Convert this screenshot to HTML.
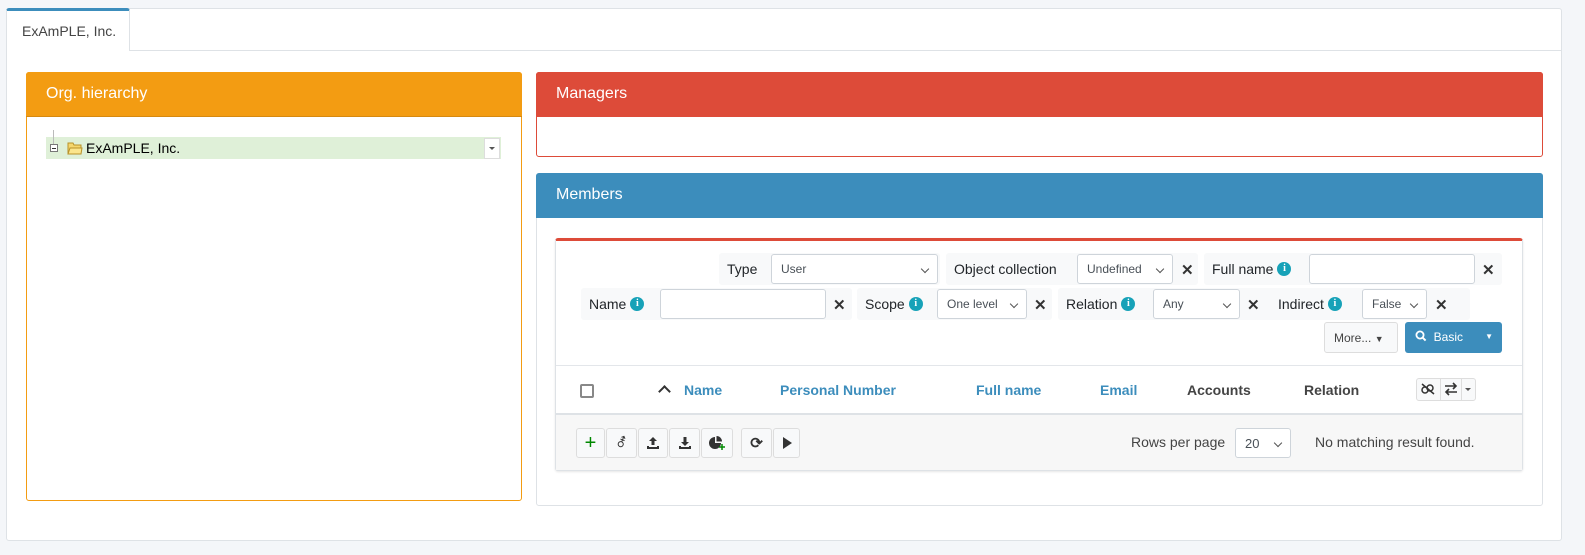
<!DOCTYPE html>
<html><head><meta charset="utf-8"><style>
*{box-sizing:border-box;margin:0;padding:0}
body{width:1585px;height:555px;background:#f4f6f9;font-family:"Liberation Sans",sans-serif;position:relative;overflow:hidden;color:#212529}
.a{position:absolute}
.lbl{position:absolute;background:#f8f9fa;border-radius:3px;font-size:14px;color:#212529;display:flex;align-items:center}
.sel{position:absolute;background:#fff;border:1px solid #ced4da;border-radius:3px;font-size:12px;color:#495057;padding-left:9px;display:flex;align-items:center}
.sel:after{content:"";position:absolute;right:9px;top:11px;width:5px;height:5px;border-right:1.3px solid #555;border-bottom:1.3px solid #555;transform:rotate(45deg)}
.inp{position:absolute;background:#fff;border:1px solid #ced4da;border-radius:3px}
.x{position:absolute;font-size:15px;font-weight:bold;color:#333}
.i{display:inline-block;width:14px;height:14px;border-radius:50%;background:#17a2b8;color:#fff;font-size:10px;font-weight:bold;text-align:center;line-height:14px;margin-left:4px;font-family:"Liberation Serif",serif}
.th{position:absolute;top:382px;font-size:14px;font-weight:bold;color:#3c8dbc}
.btn{position:absolute;top:428px;height:30px;background:#f8f9fa;border:1px solid #ddd;border-radius:3px;display:flex;align-items:center;justify-content:center;font-size:13px;color:#333}
</style></head><body>
<div class="a" style="left:6px;top:8px;width:1556px;height:533px;background:#fff;border:1px solid #dee2e6;border-radius:3px"></div>
<div class="a" style="left:6px;top:50px;width:1556px;height:1px;background:#dee2e6"></div>
<div class="a" style="left:6px;top:8px;width:124px;height:43px;background:#fff;border:1px solid #dee2e6;border-bottom:none;border-top:3px solid #3c8dbc;border-radius:3px 3px 0 0;font-size:14px;color:#444;padding:12px 0 0 15px">ExAmPLE, Inc.</div>

<div class="a" style="left:26px;top:72px;width:496px;height:429px;border:1px solid #f39c12;border-radius:3px;background:#fff"></div>
<div class="a" style="left:26px;top:72px;width:496px;height:45px;background:#f39c12;border-radius:3px 3px 0 0;color:#fff;font-size:16px;padding:13px 0 0 20px;border-bottom:1px solid #d68910">Org. hierarchy</div>
<div class="a" style="left:46px;top:137px;width:455px;height:22px;background:#dff0d8"></div>
<div class="a" style="left:53px;top:130px;width:1px;height:14px;background:#bbb"></div>
<div class="a" style="left:50px;top:144px;width:8px;height:8px;border:1px solid #777;background:#fff"></div>
<div class="a" style="left:52px;top:147.5px;width:4px;height:1px;background:#333"></div>
<svg class="a" style="left:67px;top:141px" width="16" height="14" viewBox="0 0 16 14"><path d="M1 2h5l1 2h7v9H1z" fill="#f5d76e" stroke="#b8922a"/><path d="M1 13l2-6h12l-1 6z" fill="#fbe58c" stroke="#b8922a"/></svg>
<div class="a" style="left:86px;top:140px;font-size:14px;color:#000">ExAmPLE, Inc.</div>
<div class="a" style="left:484px;top:138px;width:16px;height:21px;background:#fff;border:1px solid #ddd"></div>
<div class="a" style="left:489px;top:147px;border:3px solid transparent;border-top:3px solid #555"></div>

<div class="a" style="left:536px;top:72px;width:1007px;height:85px;border:1px solid #dd4b39;border-radius:3px;background:#fff"></div>
<div class="a" style="left:536px;top:72px;width:1007px;height:45px;background:#dd4b39;border-radius:3px 3px 0 0;color:#fff;font-size:16px;padding:13px 0 0 20px">Managers</div>

<div class="a" style="left:536px;top:173px;width:1007px;height:333px;border:1px solid #dee2e6;border-radius:3px;background:#fff"></div>
<div class="a" style="left:536px;top:173px;width:1007px;height:45px;background:#3c8dbc;border-radius:3px 3px 0 0;color:#fff;font-size:16px;padding:13px 0 0 20px">Members</div>

<div class="a" style="left:555px;top:238px;width:968px;height:233px;border:1px solid #dee2e6;border-top:3px solid #dd4b39;border-radius:3px;background:#fff;box-shadow:0 1px 2px rgba(0,0,0,.1)"></div>

<div class="lbl" style="left:719px;top:253px;width:221px;height:32px;padding-left:8px">Type</div>
<div class="sel" style="left:771px;top:254px;width:167px;height:30px">User</div>
<div class="lbl" style="left:946px;top:253px;width:252px;height:32px;padding-left:8px">Object collection</div>
<div class="sel" style="left:1077px;top:254px;width:96px;height:30px">Undefined</div>
<div class="x" style="left:1181px;top:261px">✕</div>
<div class="lbl" style="left:1204px;top:253px;width:298px;height:32px;padding-left:8px">Full name<span class="i">i</span></div>
<div class="inp" style="left:1309px;top:254px;width:166px;height:30px"></div>
<div class="x" style="left:1482px;top:261px">✕</div>

<div class="lbl" style="left:581px;top:288px;width:271px;height:32px;padding-left:8px">Name<span class="i">i</span></div>
<div class="inp" style="left:660px;top:289px;width:166px;height:30px"></div>
<div class="x" style="left:833px;top:296px">✕</div>
<div class="lbl" style="left:857px;top:288px;width:195px;height:32px;padding-left:8px">Scope<span class="i">i</span></div>
<div class="sel" style="left:937px;top:289px;width:90px;height:30px">One level</div>
<div class="x" style="left:1034px;top:296px">✕</div>
<div class="lbl" style="left:1058px;top:288px;width:224px;height:32px;padding-left:8px">Relation<span class="i">i</span></div>
<div class="sel" style="left:1153px;top:289px;width:87px;height:30px">Any</div>
<div class="x" style="left:1247px;top:296px">✕</div>
<div class="lbl" style="left:1266px;top:288px;width:204px;height:32px;padding-left:12px">Indirect<span class="i">i</span></div>
<div class="sel" style="left:1362px;top:289px;width:65px;height:30px">False</div>
<div class="x" style="left:1435px;top:296px">✕</div>

<div class="a" style="left:1324px;top:322px;width:74px;height:31px;background:#f8f9fa;border:1px solid #ddd;border-radius:3px;font-size:12px;color:#444;padding:8px 0 0 9px">More... <span style="font-size:9px">▼</span></div>
<div class="a" style="left:1405px;top:322px;width:97px;height:31px;background:#3c8dbc;border-radius:3px;font-size:12px;color:#fff;padding:8px 0 0 10px"><svg width="12" height="12" viewBox="0 0 12 12" style="vertical-align:-1px"><circle cx="5" cy="5" r="3.6" fill="none" stroke="#fff" stroke-width="1.8"/><path d="M7.6 7.6l3 3" stroke="#fff" stroke-width="2"/></svg>&nbsp;&nbsp;Basic<span style="position:absolute;right:9px;top:10px;font-size:8px">▼</span></div>

<div class="a" style="left:556px;top:365px;width:966px;height:1px;background:#e3e6ea"></div>
<div class="a" style="left:580px;top:384px;width:14px;height:14px;border:2px solid #888;border-radius:2px"></div>
<div class="a" style="left:660px;top:385px;width:9px;height:9px;border-left:2px solid #333;border-top:2px solid #333;transform:rotate(45deg);margin-top:2px"></div>
<div class="th" style="left:684px">Name</div>
<div class="th" style="left:780px">Personal Number</div>
<div class="th" style="left:976px">Full name</div>
<div class="th" style="left:1100px">Email</div>
<div class="th" style="left:1187px;color:#444">Accounts</div>
<div class="th" style="left:1304px;color:#444">Relation</div>
<div class="a" style="left:1416px;top:378px;width:60px;height:23px;border:1px solid #ddd;border-radius:3px;background:#f8f9fa"></div>
<div class="a" style="left:1440px;top:378px;width:1px;height:23px;background:#ddd"></div>
<div class="a" style="left:1461px;top:378px;width:1px;height:23px;background:#ddd"></div>
<svg class="a" style="left:1420px;top:382px" width="16" height="14" viewBox="0 0 16 14"><path d="M2 2l12 10" stroke="#333" stroke-width="1.5"/><circle cx="5" cy="8" r="3" fill="none" stroke="#333" stroke-width="1.5"/><circle cx="10" cy="6" r="3" fill="none" stroke="#333" stroke-width="1.5"/></svg>
<svg class="a" style="left:1443px;top:382px" width="16" height="14" viewBox="0 0 16 14"><path d="M2 4h11M10 1l3 3-3 3M14 10H3M6 7l-3 3 3 3" fill="none" stroke="#333" stroke-width="1.6"/></svg>
<div class="a" style="left:1465px;top:388px;border:3px solid transparent;border-top:3px solid #555"></div>
<div class="a" style="left:556px;top:413px;width:966px;height:57px;background:#f7f7f7;border-top:2px solid #dee2e6"></div>

<div class="btn" style="left:576px;width:29px;color:#080;font-size:20px">+</div>
<div class="btn" style="left:606px;width:31px">⚦</div>
<div class="btn" style="left:638px;width:30px"><svg width="14" height="14" viewBox="0 0 14 14"><path d="M7 1l-4 4h2.5v4h3V5H11z M1 10v3h12v-3h-2v1H3v-1z" fill="#333"/></svg></div>
<div class="btn" style="left:669px;width:31px"><svg width="14" height="14" viewBox="0 0 14 14"><path d="M7 10l-4-4h2.5V1h3v5H11z M1 10v3h12v-3h-2v1H3v-1z" fill="#333"/></svg></div>
<div class="btn" style="left:701px;width:32px"><svg width="18" height="16" viewBox="0 0 18 16"><path d="M7 2a6 6 0 1 0 6 6H7z" fill="#333"/><path d="M8.5 1v5.5H14A5.5 5.5 0 0 0 8.5 1z" fill="#333"/><path d="M14 9v6M11 12h6" stroke="#080" stroke-width="1.5"/></svg></div>
<div class="btn" style="left:741px;width:31px;font-size:15px;font-weight:bold">⟳</div>
<div class="btn" style="left:773px;width:27px"><svg width="10" height="12"><path d="M1 0l9 6-9 6z" fill="#333"/></svg></div>

<div class="a" style="left:1131px;top:434px;font-size:14px;color:#444">Rows per page</div>
<div class="sel" style="left:1235px;top:428px;width:56px;height:30px;font-size:13px">20</div>
<div class="a" style="left:1315px;top:434px;font-size:14px;color:#444">No matching result found.</div>
</body></html>
